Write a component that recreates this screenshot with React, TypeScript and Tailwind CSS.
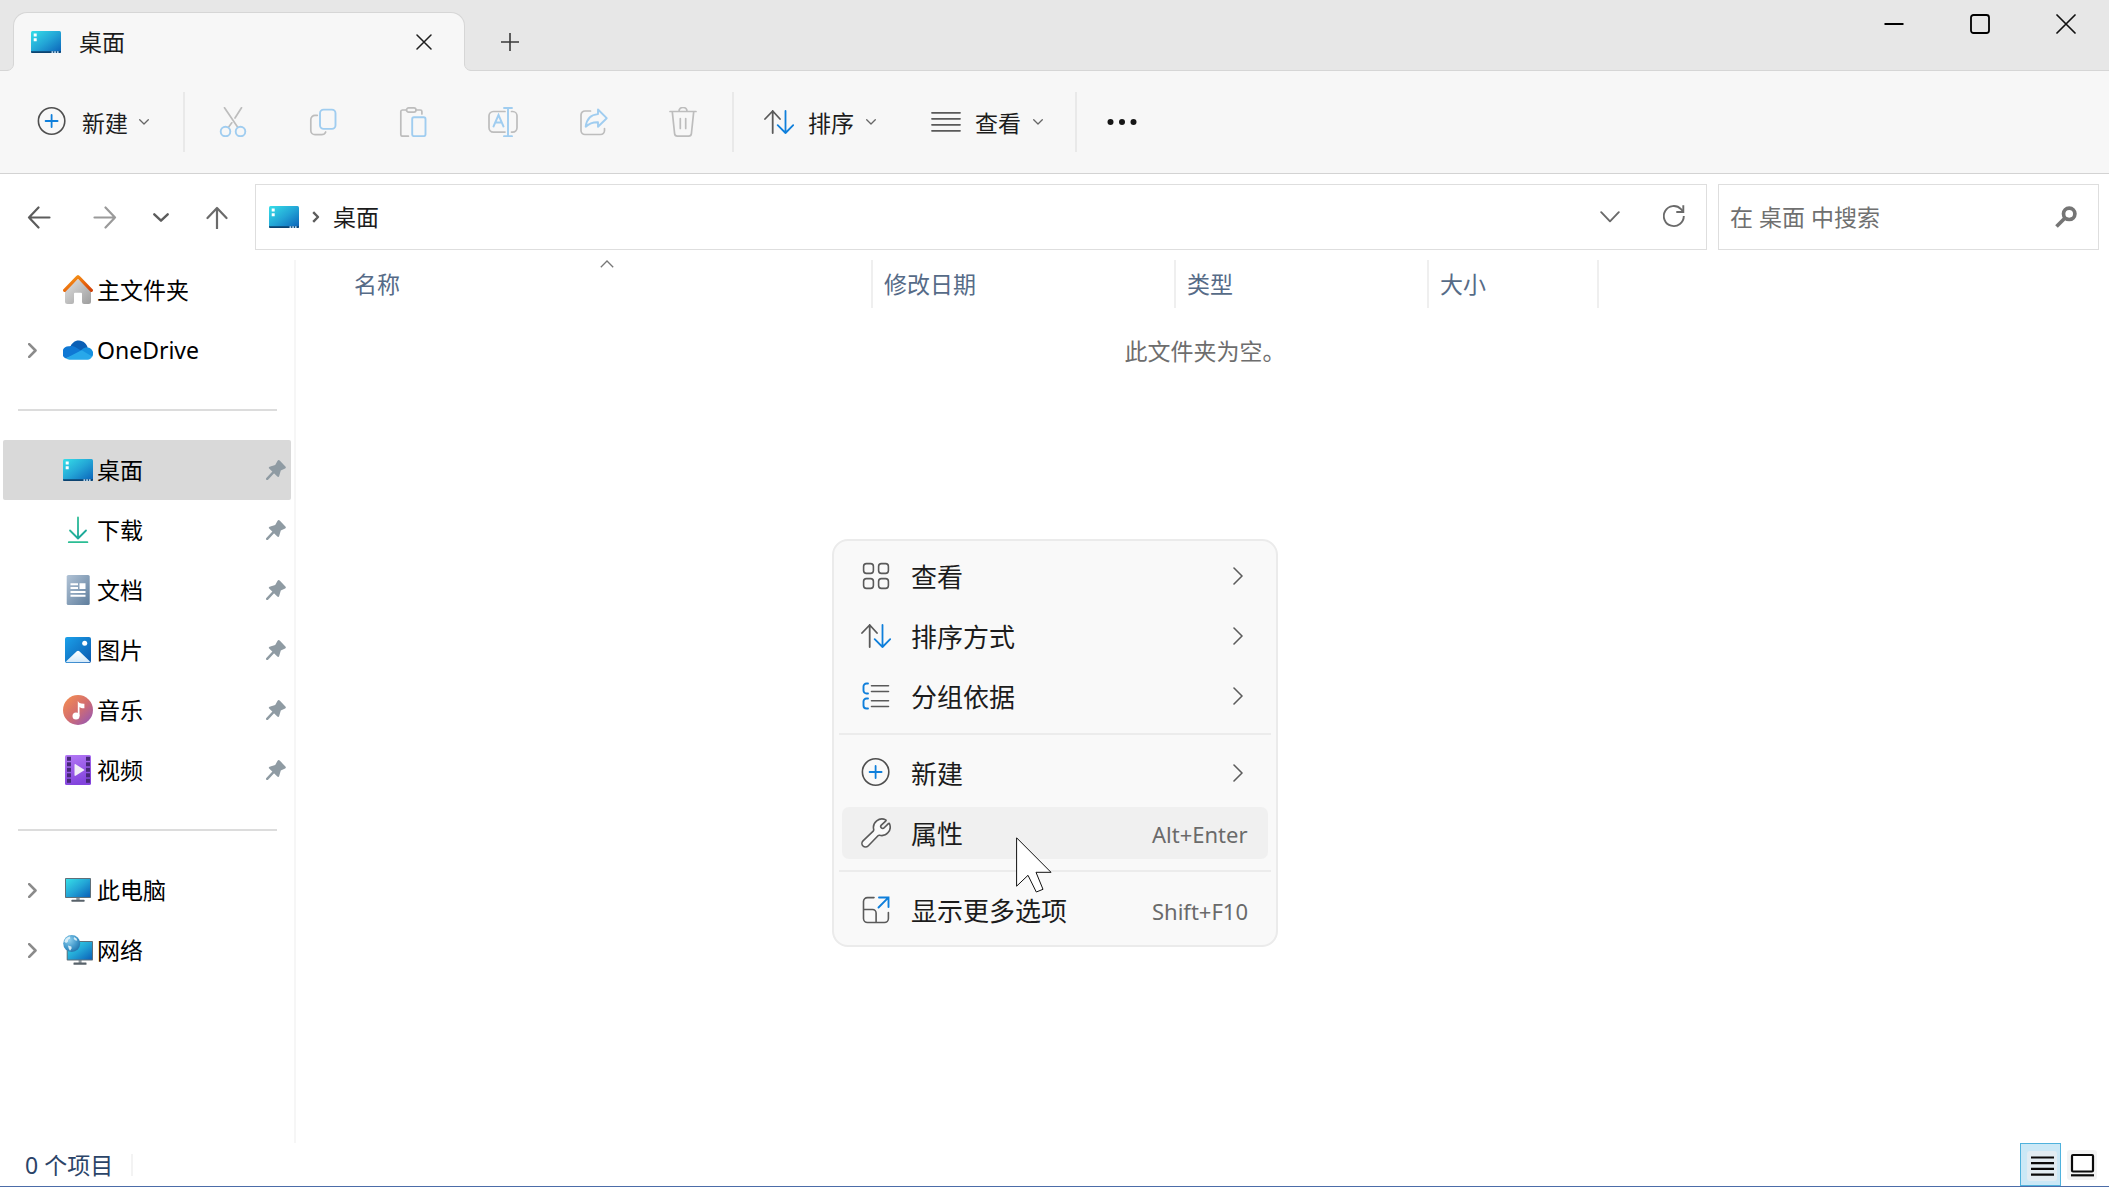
import { useState, type ReactNode } from 'react'

type NavItem = {
  id: string
  label: string
  icon: ReactNode
  pinned?: boolean
  expandable?: boolean
}

type MenuItem = {
  id: string
  label: string
  icon: ReactNode
  shortcut?: string
}

/* ================= Small glyphs ================= */

function ChevronDown({ className }: { className?: string }) {
  return (
    <svg width="10" height="6" viewBox="0 0 10 6" fill="none" stroke="currentColor" strokeWidth="1.3" className={className}>
      <path d="M.7.7 5 5 9.3.7" strokeLinecap="round" strokeLinejoin="round" />
    </svg>
  )
}

function ChevronRight() {
  return (
    <svg width="10" height="18" viewBox="0 0 10 18" fill="none" stroke="#5c5c5c" strokeWidth="1.6">
      <path d="M1 1 9 9 1 17" strokeLinecap="round" strokeLinejoin="round" />
    </svg>
  )
}

function TreeChevron() {
  return (
    <svg width="9" height="15" viewBox="0 0 9 15" fill="none" stroke="#8b8b8b" strokeWidth="2.6">
      <path d="M1.2 1.2 7.5 7.5 1.2 13.8" strokeLinecap="round" strokeLinejoin="round" />
    </svg>
  )
}

function PinIcon() {
  return (
    <svg width="20" height="20" viewBox="0 0 20 20">
      <path
        d="M11.600.7c.6-.8 1.400-.8 2.100-.1l5.700 5.800c.7.8.6 1.600-.3 2L14.800 10.500 13.200 16c-.3 1-1.200 1.200-1.900.5L3.200 8.600c-.7-.7-.5-1.500.4-1.900L9.200 5z"
        fill="#8f9ba3"
      />
      <path d="M1.200 18.800 7.500 12.200" stroke="#8f9ba3" strokeWidth="2.400" strokeLinecap="round" />
    </svg>
  )
}

/* ================= Place icons ================= */

function DesktopIcon() {
  return (
    <svg width="30" height="22" viewBox="0 0 30 22">
      <defs>
        <linearGradient id="desk" x1="0" y1="0" x2="1" y2="1">
          <stop offset="0" stopColor="#36dfe8" />
          <stop offset=".5" stopColor="#23a5d6" />
          <stop offset="1" stopColor="#0a60b8" />
        </linearGradient>
      </defs>
      <rect width="30" height="22" rx="1.500" fill="url(#desk)" />
      <path d="M0 20.300h30v.5a1.200 1.200 0 0 1-1.200 1.200H1.200A1.200 1.200 0 0 1 0 20.800z" fill="#0c4370" />
      <path d="M2.700 2.500h3v3h-3zM2.700 7.200h3v3h-3z" fill="#fff" />
      <path d="M20.500 20.300h1.700v1.700h-1.700zM23.200 20.300h1.700v1.700h-1.700zM25.900 20.300h1.700v1.700h-1.700z" fill="#b6d9f3" />
    </svg>
  )
}

function HomeIcon() {
  return (
    <svg width="30" height="30" viewBox="0 0 30 30">
      <defs>
        <linearGradient id="homeBody" x1="0" y1="0" x2="1" y2="1">
          <stop offset="0" stopColor="#e2e2e2" />
          <stop offset="1" stopColor="#9d9d9d" />
        </linearGradient>
        <linearGradient id="homeRoof" x1="0" y1="0" x2="1" y2="1">
          <stop offset="0" stopColor="#f9a11b" />
          <stop offset=".6" stopColor="#e8650c" />
          <stop offset="1" stopColor="#d24309" />
        </linearGradient>
      </defs>
      <path d="M15 4 28 15v11.500a2.500 2.500 0 0 1-2.500 2.500h-4.500a2 2 0 0 1-2-2v-8.300a1 1 0 0 0-1-1h-6a1 1 0 0 0-1 1V27a2 2 0 0 1-2 2H4.500A2.500 2.500 0 0 1 2 26.500V15z" fill="url(#homeBody)" />
      <path d="M1.600 15.300 13.900 2.700 15 1.700 16.100 2.700 28.400 15.300" stroke="url(#homeRoof)" strokeWidth="3.200" fill="none" strokeLinecap="round" strokeLinejoin="round" />
    </svg>
  )
}

function OneDriveIcon() {
  return (
    <svg width="30" height="20" viewBox="0 0 30 20">
      <path d="M7 7.500C8.500 3 12 .3 16 .5c4.300.2 7.700 3.200 8.700 7.200L17 12z" fill="#0a5fb5" />
      <path d="M6.500 6.200c2.300-.5 4.800 0 7 1.500l6 3.800L3 18.500A6.500 6.500 0 0 1 6.500 6.200z" fill="#0f78d4" />
      <path d="M19 9.400c1.600-1.500 3.600-2.100 5.400-1.900A6 6 0 0 1 29 17l-12.500-5.500z" fill="#1590df" />
      <path d="M3 18.200 17.500 10.800c.8-.4 1.700-.4 2.500.1l9.200 5.600A5.600 5.600 0 0 1 24.500 19.800H6.500A6.500 6.500 0 0 1 3 18.200z" fill="#28a8ea" />
    </svg>
  )
}

function DownloadIcon() {
  return (
    <svg width="30" height="30" viewBox="0 0 30 30" fill="none" strokeWidth="1.800" strokeLinecap="round" strokeLinejoin="round">
      <defs>
        <linearGradient id="dl" x1="0" y1="0" x2="22" y2="26" gradientUnits="userSpaceOnUse">
          <stop offset="0" stopColor="#3ccb94" />
          <stop offset="1" stopColor="#14a19b" />
        </linearGradient>
      </defs>
      <path d="M15 2.500 15.010 23M7 15.500 15 23.500 23 15.500" stroke="url(#dl)" />
      <path d="M5.800 27.200h18.600" stroke="#2bbd94" />
    </svg>
  )
}

function DocumentIcon() {
  return (
    <svg width="30" height="30" viewBox="0 0 30 30">
      <defs>
        <linearGradient id="doc" x1="0" y1="0" x2="1" y2="1">
          <stop offset="0" stopColor="#b1c3d6" />
          <stop offset="1" stopColor="#5e7d9c" />
        </linearGradient>
      </defs>
      <rect x="3.700" width="23" height="30" rx="1.600" fill="url(#doc)" />
      <path d="M7.500 8.200h7.500v2H7.500zM7.500 12h7.500v2H7.500zM16.500 8.200h6V14h-6zM7.500 16h15v2h-15zM7.500 19.800h15v2h-15z" fill="#fff" />
    </svg>
  )
}

function PictureIcon() {
  return (
    <svg width="30" height="30" viewBox="0 0 30 30">
      <defs>
        <linearGradient id="pic" x1="0" y1="0" x2="1" y2="1">
          <stop offset="0" stopColor="#1ba1ea" />
          <stop offset="1" stopColor="#0b58ae" />
        </linearGradient>
        <linearGradient id="hill" x1="0" y1="0" x2="0" y2="1">
          <stop offset="0" stopColor="#fff" />
          <stop offset="1" stopColor="#d3e9fa" />
        </linearGradient>
      </defs>
      <rect x="2" y="2" width="26" height="26" rx="2" fill="url(#pic)" />
      <path d="M13.800 16.300a1.800 1.800 0 0 1 2.500 0L27 26.600c-.3.500-.8.700-1.300.7H4.300c-.5 0-1-.2-1.300-.7z" fill="url(#hill)" />
      <circle cx="21.700" cy="8.300" r="2.500" fill="#fff" />
    </svg>
  )
}

function MusicIcon() {
  return (
    <svg width="30" height="30" viewBox="0 0 30 30">
      <defs>
        <linearGradient id="mus" x1=".1" y1=".1" x2=".85" y2=".9">
          <stop offset="0" stopColor="#f08a55" />
          <stop offset=".5" stopColor="#d56f6d" />
          <stop offset="1" stopColor="#9f5aa9" />
        </linearGradient>
      </defs>
      <circle cx="15" cy="15" r="15" fill="url(#mus)" />
      <path d="M14.800 5.800c.6 2 2.300 3 6.600 2.900v4.500c-2.400.1-3.900-.3-4.900-1.300v9.300h-1.700z" fill="#fff" />
      <circle cx="13" cy="21" r="3.500" fill="#fff" />
    </svg>
  )
}

function VideoIcon() {
  return (
    <svg width="30" height="30" viewBox="0 0 30 30">
      <defs>
        <linearGradient id="vid" x1="0" y1="0" x2=".3" y2="1">
          <stop offset="0" stopColor="#b57af6" />
          <stop offset="1" stopColor="#8344dd" />
        </linearGradient>
      </defs>
      <rect x="2" width="26" height="30" rx="1.600" fill="url(#vid)" />
      {[1.800, 7.300, 12.800, 18.300, 23.800].map(y => (
        <g key={y} fill="#48287a">
          <rect x="4" y={y} width="4" height="4" />
          <rect x="23" y={y} width="4" height="4" />
        </g>
      ))}
      <path d="M11.500 9.800c0-.6.600-.9 1.100-.6l8.300 5.200c.5.300.5.900 0 1.200l-8.300 5.200c-.5.300-1.100 0-1.100-.6z" fill="#f1eef6" />
    </svg>
  )
}

function ComputerIcon() {
  return (
    <svg width="30" height="30" viewBox="0 0 30 30">
      <path d="M13.300 22h3.400v3h-3.400z" fill="#8f989e" />
      <rect x="8.500" y="24.700" width="13" height="2" rx=".5" fill="#58626a" />
      <rect x="2" y="3" width="26" height="20" rx=".8" fill="#5f6f79" />
      <rect x="3" y="4" width="24" height="18" fill="url(#desk)" />
    </svg>
  )
}

function NetworkIcon() {
  return (
    <svg width="30" height="30" viewBox="0 0 30 30">
      <defs>
        <radialGradient id="globe" cx=".35" cy=".3" r=".8">
          <stop offset="0" stopColor="#8fd0ee" />
          <stop offset=".6" stopColor="#3f96c9" />
          <stop offset="1" stopColor="#1f6ca6" />
        </radialGradient>
      </defs>
      <path d="M15.600 25h3v3h-3z" fill="#8f989e" />
      <rect x="10.500" y="27.500" width="13" height="2.300" rx=".5" fill="#58626a" />
      <rect x="3.700" y="6" width="26.300" height="19.500" rx=".8" fill="#5f6f79" />
      <rect x="4.700" y="7" width="24.300" height="17.500" fill="url(#desk)" />
      <circle cx="8.700" cy="8.500" r="8.500" fill="url(#globe)" />
      <path d="M2.500 4C4 2.500 5.500 1.700 7 1.600L7.300 3.500 5.200 4.800 4.800 7 3 8 1.300 6.500zM11 2l2.500 1.500.8 2.300-2.300-.5-1.300-1.500zM5 10.500l3.300 1 .4 1.800-1.700 2.400-1.300-2.300z" fill="#e3f3fa" opacity=".9" />
    </svg>
  )
}

/* ================= Command icons ================= */

function NewIcon() {
  return (
    <svg width="30" height="30" viewBox="0 0 30 30" fill="none" strokeWidth="1.600">
      <circle cx="14.600" cy="14" r="13.200" stroke="#4f4f4f" />
      <path d="M14.600 8v12M8.600 14h12" stroke="#0f7fdb" strokeWidth="1.800" strokeLinecap="round" />
    </svg>
  )
}

function CutIcon() {
  return (
    <svg width="30" height="30" viewBox="0 0 30 30" fill="none" strokeWidth="1.700" strokeLinecap="round">
      <path d="M6.500.8 19.700 20.300M23.500.8 17 11M13.800 15.800 10.500 20.300" stroke="#bdbdbd" />
      <circle cx="7.500" cy="24.500" r="4.800" stroke="#a0cdf0" strokeWidth="1.900" />
      <circle cx="22.500" cy="24.500" r="4.800" stroke="#a0cdf0" strokeWidth="1.900" />
    </svg>
  )
}

function CopyIcon() {
  return (
    <svg width="30" height="30" viewBox="0 0 30 30" fill="none" strokeWidth="1.700">
      <path d="M9.300 8.300H7A4.200 4.200 0 0 0 2.800 12.500v11A4.200 4.200 0 0 0 7 27.700h6.500c2 0 3.500-1 4.200-2.700" stroke="#bdbdbd" strokeLinecap="round" />
      <rect x="12" y="2.600" width="15.500" height="19.300" rx="3.600" stroke="#a0cdf0" strokeWidth="1.900" />
    </svg>
  )
}

function PasteIcon() {
  return (
    <svg width="30" height="30" viewBox="0 0 30 30" fill="none" strokeWidth="1.700">
      <path d="M8.500 3H4.300A1.600 1.600 0 0 0 2.800 4.600v23a1.600 1.600 0 0 0 1.600 1.600h6M18 3h4.300a1.600 1.600 0 0 1 1.600 1.600V7" stroke="#bdbdbd" strokeLinecap="round" />
      <rect x="8.500" y=".9" width="9.500" height="4.200" rx="2.100" stroke="#bdbdbd" />
      <rect x="14.200" y="10.300" width="13.300" height="18.800" rx="1.700" stroke="#a0cdf0" strokeWidth="1.900" />
    </svg>
  )
}

function RenameIcon() {
  return (
    <svg width="30" height="30" viewBox="0 0 30 30" fill="none" strokeWidth="1.700" strokeLinecap="round">
      <path d="M17 4.500H5.300A4.300 4.300 0 0 0 1 8.800v12A4.300 4.300 0 0 0 5.300 25.100H17M23.500 4.500h1.200A4.300 4.300 0 0 1 29 8.800v12a4.300 4.300 0 0 1-4.300 4.300h-1.200" stroke="#bdbdbd" />
      <path d="M5.500 19.500 10.500 8l5 11.500M7.300 15.500h6.400M20 1.200v28M16 1h8M16 29.300h8" stroke="#a0cdf0" strokeWidth="1.900" />
    </svg>
  )
}

function ShareIcon() {
  return (
    <svg width="30" height="30" viewBox="0 0 30 30" fill="none" strokeWidth="1.700" strokeLinecap="round" strokeLinejoin="round">
      <path d="M12.500 4H7A4 4 0 0 0 3 8v15.500a4 4 0 0 0 4 4h15.500a4 4 0 0 0 4-4v-2" stroke="#bdbdbd" />
      <path d="M20 2.500 28.700 11.200l-8.700 8.600v-4.600c-5.500-.2-9 1.300-12.300 4.500.8-7.500 5-12 12.300-12.600z" stroke="#a0cdf0" strokeWidth="1.900" />
    </svg>
  )
}

function DeleteIcon() {
  return (
    <svg width="30" height="30" viewBox="0 0 30 30" fill="none" stroke="#bdbdbd" strokeWidth="1.700" strokeLinecap="round">
      <path d="M2 4.500h26M11 4.300a4 4 0 0 1 8 0M4.300 4.800l2.300 21.800a2.800 2.800 0 0 0 2.800 2.500h11.200a2.800 2.800 0 0 0 2.800-2.500L25.700 4.800M12.300 11.500v10M17.700 11.500v10" />
    </svg>
  )
}

function SortIcon() {
  return (
    <svg width="30" height="30" viewBox="0 0 30 30" fill="none" strokeWidth="1.800" strokeLinecap="round" strokeLinejoin="round">
      <path d="M8.700 26V4M1 12 8.700 4 16 12" stroke="#5a5a5a" />
      <path d="M21.500 4v22M13.700 18.200 21.500 26 29.200 18.200" stroke="#0f7fdb" />
    </svg>
  )
}

function LinesIcon() {
  return (
    <svg width="30" height="30" viewBox="0 0 30 30" fill="none" stroke="#5a5a5a" strokeWidth="1.800" strokeLinecap="round">
      <path d="M1 5.800h28M1 11.800h28M1 17.800h28M1 23.800h28" />
    </svg>
  )
}

function GridIcon() {
  return (
    <svg width="30" height="30" viewBox="0 0 30 30" fill="none" stroke="#5a5a5a" strokeWidth="1.600">
      <rect x="2.600" y="2.600" width="9.800" height="9.800" rx="2.800" />
      <rect x="17.600" y="2.600" width="9.800" height="9.800" rx="2.800" />
      <rect x="2.600" y="17.600" width="9.800" height="9.800" rx="2.800" />
      <rect x="17.600" y="17.600" width="9.800" height="9.800" rx="2.800" />
    </svg>
  )
}

function GroupIcon() {
  return (
    <svg width="30" height="30" viewBox="0 0 30 30" fill="none" strokeWidth="1.600" strokeLinecap="round">
      <path d="M10.500 4.700h17M10.500 10.500h17M10.500 19.700h17M10.500 25.500h17" stroke="#5a5a5a" />
      <path d="M7 2.500H5.500a3 3 0 0 0-3 3v4a3 3 0 0 0 3 3H7M7 17.500H5.500a3 3 0 0 0-3 3v4a3 3 0 0 0 3 3H7" stroke="#0f7fdb" strokeWidth="1.900" />
    </svg>
  )
}

function WrenchIcon() {
  return (
    <svg width="30" height="30" viewBox="0 0 30 30" fill="#fafafa" stroke="#5a5a5a" strokeWidth="1.600" strokeLinejoin="round">
      <path d="M24.800 1.900A8.500 8.500 0 0 0 12.700 11.500c.1.600-.1 1.200-.5 1.600L2 22.900a3.600 3.600 0 0 0 5.100 5.100L17 17.800c.4-.4 1-.6 1.600-.5A8.500 8.500 0 0 0 28.500 5.800c-.2-.5-.7-.6-1.100-.2L23.200 9.800a1.900 1.900 0 0 1-2.900-2.700l4.600-4.300c.3-.3.300-.7-.1-.9z" />
    </svg>
  )
}

function MoreOptionsIcon() {
  return (
    <svg width="30" height="30" viewBox="0 0 30 30" fill="none" strokeWidth="1.600" strokeLinecap="round">
      <path d="M13 2.600H6.500a4 4 0 0 0-4 4v16.900a4 4 0 0 0 4 4h16.900a4 4 0 0 0 4-4V17.500M2.600 14.500h9a3.500 3.500 0 0 1 3.500 3.500v9.300" stroke="#5a5a5a" />
      <path d="M18 2.500h9.500V12M27.300 2.700 17.500 12.500" stroke="#0f7fdb" strokeWidth="1.900" />
    </svg>
  )
}

/* ================= Data ================= */

const NAV_GROUPS: NavItem[][] = [
  [
    { id: 'home', label: '主文件夹', icon: <HomeIcon /> },
    { id: 'onedrive', label: 'OneDrive', icon: <OneDriveIcon />, expandable: true },
  ],
  [
    { id: 'desktop', label: '桌面', icon: <DesktopIcon />, pinned: true },
    { id: 'downloads', label: '下载', icon: <DownloadIcon />, pinned: true },
    { id: 'documents', label: '文档', icon: <DocumentIcon />, pinned: true },
    { id: 'pictures', label: '图片', icon: <PictureIcon />, pinned: true },
    { id: 'music', label: '音乐', icon: <MusicIcon />, pinned: true },
    { id: 'videos', label: '视频', icon: <VideoIcon />, pinned: true },
  ],
  [
    { id: 'computer', label: '此电脑', icon: <ComputerIcon />, expandable: true },
    { id: 'network', label: '网络', icon: <NetworkIcon />, expandable: true },
  ],
]

const FILE_ACTIONS = [
  { label: '剪切', icon: <CutIcon /> },
  { label: '复制', icon: <CopyIcon /> },
  { label: '粘贴', icon: <PasteIcon /> },
  { label: '重命名', icon: <RenameIcon /> },
  { label: '共享', icon: <ShareIcon /> },
  { label: '删除', icon: <DeleteIcon /> },
]

const MENU_GROUPS: MenuItem[][] = [
  [
    { id: 'view', label: '查看', icon: <GridIcon /> },
    { id: 'sort', label: '排序方式', icon: <SortIcon /> },
    { id: 'group', label: '分组依据', icon: <GroupIcon /> },
  ],
  [
    { id: 'new', label: '新建', icon: <NewIcon /> },
    { id: 'props', label: '属性', icon: <WrenchIcon />, shortcut: 'Alt+Enter' },
  ],
  [{ id: 'more', label: '显示更多选项', icon: <MoreOptionsIcon />, shortcut: 'Shift+F10' }],
]

/* ================= Sections ================= */

function TitleBar() {
  return (
    <header className="flex h-[71px] items-end border-b border-[#d6d6d6] bg-[#e7e7e7]">
      <div className="relative -mb-px ml-[13px] flex h-[59px] w-[452px] items-center rounded-t-[14px] border border-b-0 border-[#d6d6d6] bg-[#f7f7f7] pr-6 pl-[17px]">
        <svg width="7" height="7" viewBox="0 0 7 7" className="absolute bottom-0 -left-[7px]">
          <path d="M0 6.500A6.500 6.500 0 0 0 6.500 0H8v8H0z" fill="#f7f7f7" />
          <path d="M0 6.500A6.500 6.500 0 0 0 6.500 0" fill="none" stroke="#d6d6d6" />
        </svg>
        <svg width="7" height="7" viewBox="0 0 7 7" className="absolute -right-[7px] bottom-0">
          <path d="M7 6.500A6.500 6.500 0 0 1 .5 0H-1v8h8z" fill="#f7f7f7" />
          <path d="M7 6.500A6.500 6.500 0 0 1 .5 0" fill="none" stroke="#d6d6d6" />
        </svg>
        <DesktopIcon />
        <span className="ml-[18px] grow">桌面</span>
        <button aria-label="关闭标签页" className="flex size-8 items-center justify-center">
          <svg width="16" height="16" viewBox="0 0 16 16" stroke="#1f1f1f" strokeWidth="1.500" strokeLinecap="round">
            <path d="M1 1 15 15M15 1 1 15" />
          </svg>
        </button>
      </div>
      <button aria-label="新标签页" className="mb-[3px] ml-5 flex size-[50px] items-center justify-center">
        <svg width="18" height="18" viewBox="0 0 18 18" stroke="#3a3a3a" strokeWidth="1.600">
          <path d="M9 0v18M0 9h18" />
        </svg>
      </button>
      <div className="ml-auto flex self-start">
        <button aria-label="最小化" className="flex h-[47px] w-[86px] items-center justify-center">
          <svg width="20" height="20" viewBox="0 0 20 20" stroke="#000" strokeWidth="2">
            <path d="M.5 10h19" />
          </svg>
        </button>
        <button aria-label="最大化" className="flex h-[47px] w-[86px] items-center justify-center">
          <svg width="20" height="20" viewBox="0 0 20 20" fill="none" stroke="#000" strokeWidth="1.800">
            <rect x="1" y="1" width="18" height="18" rx="2.500" />
          </svg>
        </button>
        <button aria-label="关闭" className="flex h-[47px] w-[86px] items-center justify-center">
          <svg width="20" height="20" viewBox="0 0 20 20" stroke="#111" strokeWidth="1.700" strokeLinecap="round">
            <path d="M1 1 19 19M19 1 1 19" />
          </svg>
        </button>
      </div>
    </header>
  )
}

function Toolbar() {
  return (
    <div className="flex h-[103px] items-center border-b border-[#d3d3d3] bg-[#f7f7f7]">
      <button className="flex items-center pr-[34px] pl-[37px]">
        <NewIcon />
        <span className="mr-[11px] ml-[15px] pt-[2px]">新建</span>
        <ChevronDown className="text-[#666]" />
      </button>
      <div className="h-15 w-[2px] bg-[#e9e9e9]" />
      <div className="mr-1 ml-[3px] flex">
        {FILE_ACTIONS.map(a => (
          <button key={a.label} aria-label={a.label} disabled className="flex h-15 w-[90px] items-center justify-center">
            {a.icon}
          </button>
        ))}
      </div>
      <div className="h-15 w-[2px] bg-[#e9e9e9]" />
      <button className="flex items-center pr-[27px] pl-[30px]">
        <SortIcon />
        <span className="mr-3 ml-[14px] pt-[2px]">排序</span>
        <ChevronDown className="text-[#666]" />
      </button>
      <button className="flex items-center pr-8 pl-[28px]">
        <LinesIcon />
        <span className="mr-3 ml-[14px] pt-[2px]">查看</span>
        <ChevronDown className="text-[#666]" />
      </button>
      <div className="h-15 w-[2px] bg-[#e9e9e9]" />
      <button aria-label="查看更多" className="px-[30px]">
        <svg width="30" height="8" viewBox="0 0 30 8" fill="#161616">
          <circle cx="3.500" cy="4" r="3" />
          <circle cx="15" cy="4" r="3" />
          <circle cx="26.500" cy="4" r="3" />
        </svg>
      </button>
    </div>
  )
}

function AddressRow() {
  return (
    <div className="flex h-[86px] items-center px-[10px]">
      <nav className="-ml-1 mr-[5px] flex items-center">
        <button aria-label="后退" className="flex h-12 w-[66px] items-center justify-center">
          <svg width="24" height="24" viewBox="0 0 24 24" fill="none" stroke="#5c5c5c" strokeWidth="2.200" strokeLinecap="round" strokeLinejoin="round">
            <path d="M22.500 12.500H2M11.500 2.500 2 12.500 11.500 22.500" />
          </svg>
        </button>
        <button aria-label="前进" className="flex h-12 w-[66px] items-center justify-center">
          <svg width="24" height="24" viewBox="0 0 24 24" fill="none" stroke="#9a9a9a" strokeWidth="2.200" strokeLinecap="round" strokeLinejoin="round">
            <path d="M1.500 12.500H22M12.500 2.500 22 12.500 12.500 22.500" />
          </svg>
        </button>
        <button aria-label="最近位置" className="flex h-12 w-[46px] items-center justify-center">
          <svg width="16" height="9" viewBox="0 0 16 9" fill="none" stroke="#5c5c5c" strokeWidth="2.400" strokeLinecap="round" strokeLinejoin="round">
            <path d="M1.300 1.300 8 7.700 14.700 1.300" />
          </svg>
        </button>
        <button aria-label="向上" className="flex h-12 w-[66px] items-center justify-center">
          <svg width="24" height="24" viewBox="0 0 24 24" fill="none" stroke="#6a6a6a" strokeWidth="2.200" strokeLinecap="round" strokeLinejoin="round">
            <path d="M12 23.500V3M2.500 13 12 3 21.500 13" />
          </svg>
        </button>
      </nav>
      <div className="flex h-[66px] grow items-center border border-[#dedede] pl-[13px]">
        <DesktopIcon />
        <svg width="8" height="12" viewBox="0 0 8 12" fill="none" stroke="#5c5c5c" strokeWidth="2.400" className="ml-[13px]">
          <path d="M1.200 1.200 6 6 1.200 10.800" strokeLinejoin="round" />
        </svg>
        <span className="ml-[13px] grow">桌面</span>
        <button aria-label="以前的位置" className="flex h-full w-16 items-center justify-center">
          <svg width="20" height="12" viewBox="0 0 20 12" fill="none" stroke="#6a6a6a" strokeWidth="1.900" strokeLinecap="round" strokeLinejoin="round">
            <path d="M1.200 1.200 10 10.300 18.800 1.200" />
          </svg>
        </button>
        <button aria-label="刷新" className="flex h-full w-16 items-center justify-center">
          <svg width="22" height="24" viewBox="0 0 22 24" fill="none" stroke="#6a6a6a" strokeWidth="1.900">
            <path d="M20.800 11A10 10 0 1 1 18 4.100L19.800 6" />
            <path d="M20.300.3v6.700h-7" />
          </svg>
        </button>
      </div>
      <form role="search" className="ml-[11px] flex h-[66px] w-[381px] items-center border border-[#dedede]" onSubmit={e => e.preventDefault()}>
        <input
          type="text"
          aria-label="搜索"
          placeholder="在 桌面 中搜索"
          className="h-full min-w-0 grow bg-transparent pl-[11px] outline-none placeholder:text-[#707070]"
        />
        <button aria-label="开始搜索" className="flex h-full w-[70px] items-center justify-center">
          <svg width="22" height="22" viewBox="0 0 22 22" fill="none" stroke="#757575">
            <circle cx="14.200" cy="7.800" r="5.700" strokeWidth="3.700" />
            <path d="M9.500 12.500 1.500 20.500" strokeWidth="3.700" />
          </svg>
        </button>
      </form>
    </div>
  )
}

function Sidebar() {
  const [selected, setSelected] = useState('desktop')

  return (
    <nav className="w-[296px] shrink-0 border-r-2 border-[#f6f6f6] pr-[3px] pl-[3px]">
      {NAV_GROUPS.map((group, gi) => (
        <div key={gi}>
          {gi > 0 && (
            <div className="flex h-15 items-center pr-[14px] pl-[15px]">
              <div className="h-[2px] grow bg-[#dcdcdc]" />
            </div>
          )}
          {group.map(it => (
            <button
              key={it.id}
              onClick={() => setSelected(it.id)}
              className={`flex h-15 w-full items-center rounded-[2px] pr-[5px] pl-[25px] text-left text-black ${
                selected === it.id ? 'bg-[#d9d9d9]' : ''
              }`}
            >
              <span className="w-[35px]">{it.expandable && <TreeChevron />}</span>
              {it.icon}
              <span className="ml-1 grow">{it.label}</span>
              {it.pinned && <PinIcon />}
            </button>
          ))}
        </div>
      ))}
    </nav>
  )
}

function FileList() {
  return (
    <main className="grow pl-[47px]">
      <table className="w-[1255px] table-fixed text-left text-[#566b87]">
        <colgroup>
          <col className="w-[529px]" />
          <col className="w-[303px]" />
          <col className="w-[253px]" />
          <col className="w-[170px]" />
        </colgroup>
        <thead>
          <tr className="h-12">
            <th className="relative border-r-2 border-[#efefef] px-[11px] font-normal">
              名称
              <svg width="14" height="8" viewBox="0 0 14 8" fill="none" stroke="#777" strokeWidth="1.300" className="absolute top-0 left-1/2 -translate-x-1/2">
                <path d="M.8 7.200 7 1 13.200 7.200" />
              </svg>
            </th>
            <th className="border-r-2 border-[#efefef] px-[11px] font-normal">修改日期</th>
            <th className="border-r-2 border-[#efefef] px-[11px] font-normal">类型</th>
            <th className="border-r-2 border-[#efefef] px-[11px] font-normal">大小</th>
          </tr>
        </thead>
      </table>
      <p className="mt-7 -ml-[42px] text-center text-[#6d6d6d]">此文件夹为空。</p>
    </main>
  )
}

function StatusBar() {
  return (
    <footer className="flex h-11 items-center border-b border-[#4c6ca8] pr-3 pl-[25px]">
      <span className="text-[#2b4468]">0 个项目</span>
      <div className="ml-[18px] h-[22px] w-[2px] bg-[#f3f3f3]" />
      <button aria-label="详细信息" className="mr-[6px] ml-auto flex h-full w-[41px] items-end justify-end border border-[#4fb2dd] bg-[#cbe8f6] pr-[3px] pb-1">
        <svg width="30" height="30" viewBox="0 0 30 30">
          <rect width="30" height="30" rx="3" fill="#e2ecf2" />
          <path d="M4 6.500h23M4 12.200h23M4 17.900h23M4 23.600h23" stroke="#0a0a0a" strokeWidth="2.200" />
        </svg>
      </button>
      <button aria-label="大图标">
        <svg width="30" height="30" viewBox="0 0 30 30">
          <rect width="30" height="30" rx="3" fill="#f3f3f3" />
          <rect x="5" y="5" width="21" height="16.500" rx="1" fill="#fff" stroke="#0a0a0a" strokeWidth="2.200" />
          <path d="M4 25.300h23" stroke="#0a0a0a" strokeWidth="2.200" />
        </svg>
      </button>
    </footer>
  )
}

function ContextMenu() {
  const [active, setActive] = useState('props')

  return (
    <div role="menu" className="absolute top-[539px] left-[832px] w-[446px] rounded-[16px] border-2 border-[#ebebeb] bg-[#f9f9f9] py-[5px]">
      {MENU_GROUPS.map((group, gi) => (
        <div key={gi}>
          {gi > 0 && <div className="mx-[5px] mt-[7px] mb-2 h-[2px] bg-[#ececec]" />}
          {group.map(it => (
            <div key={it.id} className="px-2 py-1">
              <button
                role="menuitem"
                onMouseEnter={() => setActive(it.id)}
                className={`flex h-[52px] w-full items-center rounded-[7px] pl-[19px] text-left text-[#1c1c1c] ${
                  active === it.id ? 'bg-[#f0f0f0]' : ''
                }`}
              >
                {it.icon}
                <span className="ml-[20px] grow pt-[2px] text-[26px] leading-[36px]">{it.label}</span>
                {it.shortcut ? (
                  <span className="w-[116px] pt-[2px] text-[22px] text-[#6a6a6a]">{it.shortcut}</span>
                ) : (
                  <span className="w-[35px]">
                    <ChevronRight />
                  </span>
                )}
              </button>
            </div>
          ))}
        </div>
      ))}
    </div>
  )
}

function Pointer() {
  return (
    <svg width="37" height="57" viewBox="0 0 37 57" className="pointer-events-none absolute top-[837px] left-[1016px]">
      <path d="M.6.800V49.200L12 38.300 20.300 55 27 52.300 20 35.300H35z" fill="#fff" stroke="#111" strokeWidth="1" />
    </svg>
  )
}

/* ================= Window ================= */

export default function App() {
  return (
    <div className="relative flex min-h-screen flex-col bg-white font-['Noto_Sans','Noto_Sans_CJK_SC',sans-serif] text-[23px] leading-[30px] text-[#1c1c1c]">
      <TitleBar />
      <Toolbar />
      <AddressRow />
      <div className="flex grow">
        <Sidebar />
        <FileList />
      </div>
      <StatusBar />
      <ContextMenu />
      <Pointer />
    </div>
  )
}
